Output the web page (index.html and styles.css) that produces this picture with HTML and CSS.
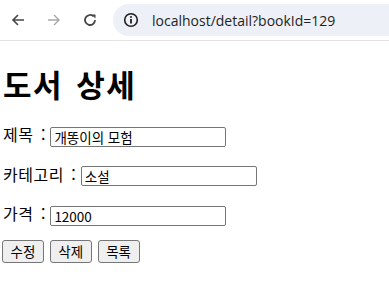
FILE: index.html
```html
<!DOCTYPE html>
<html lang="ko">
<head>
  <meta charset="UTF-8" />
  <meta name="viewport" content="width=device-width, initial-scale=1.0" />
  <title>도서 상세</title>
  <link rel="stylesheet" href="styles.css">
</head>
<body>
  <div class="toolbar">
    <span class="nav-btn">
      <svg width="16" height="16" viewBox="0 0 16 16"><path d="M14 8H3M8 3L3 8l5 5" fill="none" stroke="#474747" stroke-width="1.6"/></svg>
    </span>
    <span class="nav-btn">
      <svg width="16" height="16" viewBox="0 0 16 16"><path d="M2 8h11M8 3l5 5-5 5" fill="none" stroke="#a8a8a8" stroke-width="1.4"/></svg>
    </span>
    <span class="nav-btn">
      <svg width="16" height="16" viewBox="0 0 16 16"><path d="M13 8a5 5 0 1 1-1.5-3.6" fill="none" stroke="#474747" stroke-width="1.8"/><path d="M9.5 2.5h4v4z" fill="#474747"/></svg>
    </span>
    <div class="omnibox">
      <span class="info-icon">
        <svg width="16" height="16" viewBox="0 0 16 16"><circle cx="8" cy="8" r="6.3" fill="none" stroke="#1f1f1f" stroke-width="1.6"/><path d="M8 7v4.5" stroke="#1f1f1f" stroke-width="1.8"/><circle cx="8" cy="4.9" r="1" fill="#1f1f1f"/></svg>
      </span>
      <span class="url">localhost/detail?bookId=129</span>
    </div>
  </div>

  <div class="page">
    <h1>도서 상세</h1>
    <p class="field"><span class="label">제목 :</span> <input type="text" class="text-input" value="개똥이의 모험"></p>
    <p class="field"><span class="label">카테고리 :</span> <input type="text" class="text-input" value="소설"></p>
    <p class="field"><span class="label">가격 :</span> <input type="text" class="text-input" value="12000"></p>
    <p class="actions">
      <button class="btn">수정</button>
      <button class="btn">삭제</button>
      <button class="btn">목록</button>
    </p>
  </div>
</body>
</html>
```

FILE: styles.css
```css
body {
  margin: 0;
  font-family: "Noto Sans CJK KR", "Noto Sans", sans-serif;
  background: #fff;
  color: #000;
}

.toolbar {
  display: flex;
  align-items: center;
  height: 40px;
  border-bottom: 1px solid #e3e3e3;
  padding-left: 8px;
}
.nav-btn {
  display: flex;
  align-items: center;
  justify-content: center;
  width: 20px;
  height: 20px;
  margin-right: 16px;
}
.nav-btn:nth-child(3) { margin-right: 13px; }
.omnibox {
  display: flex;
  align-items: center;
  flex: 1;
  height: 32px;
  background: #edf0f7;
  border-radius: 16px 0 0 16px;
  padding-left: 10px;
}
.info-icon {
  display: flex;
  width: 16px;
  margin-right: 13px;
}
.url {
  font-family: "Open Sans", "Noto Sans", sans-serif;
  font-size: 14px;
  color: #1f1f1f;
}

.page {
  padding: 0 3px;
}
h1 {
  font-size: 31px;
  font-weight: bold;
  margin: 23px 0 19px;
  line-height: 40px;
  letter-spacing: 1.5px;
  word-spacing: 3px;
}
.field {
  font-size: 16px;
  line-height: 22px;
  margin: 0 0 16px;
}
.label {
  letter-spacing: 0.5px;
  word-spacing: 2.5px;
}
.text-input {
  width: 176px;
  height: 20px;
  box-sizing: border-box;
  border: 1px solid #767676;
  border-radius: 2px;
  padding: 0 3px;
  font-family: "Noto Sans CJK KR", sans-serif;
  font-size: 13.5px;
  vertical-align: middle;
}
.actions {
  margin: -2px 0 0 -1px;
  display: flex;
  gap: 6px;
}
.btn {
  height: 23px;
  padding: 0 7.5px;
  font-family: "Noto Sans CJK KR", sans-serif;
  font-size: 13.5px;
  background: #efefef;
  border: 1px solid #767676;
  border-radius: 3px;
  color: #000;
}
```
